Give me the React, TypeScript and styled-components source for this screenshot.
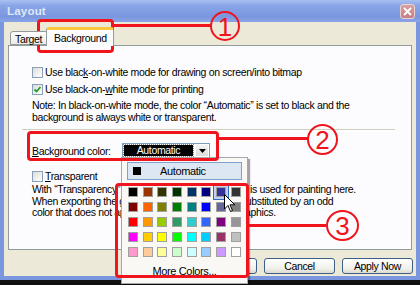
import styled, { createGlobalStyle } from "styled-components";

const GlobalStyle = createGlobalStyle`
  html, body {
    margin: 0;
    padding: 0;
    background: #101010;
  }
  body {
    font-family: "Liberation Sans", Arial, sans-serif;
    font-size: 10.5px;
    letter-spacing: -0.35px;
    color: #000000;
  }
`;

const Screen = styled.div`
  position: relative;
  width: 420px;
  height: 285px;
  overflow: hidden;
`;

const Window = styled.div`
  width: 420px;
  height: 280px;
  box-sizing: border-box;
  background: #ece9d8;
  border: 4px solid #7a96df;
  border-top: 0;
  display: flex;
  flex-direction: column;
`;

const TitleBar = styled.div`
  margin: 0 -4px;
  height: 22px;
  flex: none;
  display: flex;
  align-items: center;
  justify-content: space-between;
  padding: 0 5px 0 7px;
  background: linear-gradient(#a9c0f0 0%, #8aa6e8 25%, #7a96df 75%, #8aa4e6 100%);
`;

const Title = styled.div`
  font-weight: 700;
  font-size: 11.5px;
  letter-spacing: 0.2px;
  color: #dfe7f8;
`;

const CloseButton = styled.div`
  width: 15px;
  height: 15px;
  box-sizing: border-box;
  border: 1px solid #eed2d2;
  border-radius: 3px;
  background: linear-gradient(#d9a0a0, #c57f84);
  display: flex;
  align-items: center;
  justify-content: center;
  margin-top: 1px;
`;

const Body = styled.div`
  flex: 1;
  display: flex;
  flex-direction: column;
  padding: 5px 4px 0 4px;
`;

const TabStrip = styled.div`
  height: 18px;
  display: flex;
  align-items: flex-end;
  padding-left: 2px;
  position: relative;
  z-index: 1;
`;

const Tab = styled.div<{ $active?: boolean }>`
  box-sizing: border-box;
  height: ${(p) => (p.$active ? "19px" : "14px")};
  margin-bottom: ${(p) => (p.$active ? "-1px" : "0")};
  margin-left: ${(p) => (p.$active ? "-2px" : "0")};
  padding: ${(p) => (p.$active ? "2px 6px 0 7px" : "1px 5px 0 4px")};
  border: 1px solid #919b9c;
  border-bottom: ${(p) => (p.$active ? "0" : "1px solid #919b9c")};
  border-top: ${(p) => (p.$active ? "3px solid #ffc83c" : "1px solid #919b9c")};
  border-radius: 3px 3px 0 0;
  background: ${(p) => (p.$active ? "#fcfcfe" : "linear-gradient(#ffffff, #ecebe6)")};
  line-height: 12px;
  white-space: nowrap;
`;

const Panel = styled.div`
  height: 205px;
  box-sizing: border-box;
  border: 1px solid #919b9c;
  background: #fcfcfe;
  padding: 18px 16px 0 23px;
  display: flex;
  flex-direction: column;
`;

const CheckRow = styled.div<{ $gap?: number }>`
  height: 16px;
  display: flex;
  align-items: center;
  gap: 2px;
  margin-top: ${(p) => p.$gap ?? 0}px;
  white-space: nowrap;
`;

const CheckBox = styled.div`
  width: 11px;
  height: 11px;
  box-sizing: border-box;
  border: 1px solid #8aa0b8;
  background: linear-gradient(135deg, #dcdcd6, #ffffff);
  display: flex;
  align-items: center;
  justify-content: center;
  flex: none;
`;

const Key = styled.span`
  text-decoration: underline;
`;

const Paragraph = styled.div<{ $gap: number; $line: number }>`
  margin-top: ${(p) => p.$gap}px;
  line-height: ${(p) => p.$line}px;
  white-space: nowrap;
`;

const Separator = styled.div`
  margin: 6px 0 0 -10px;
  height: 1px;
  border-top: 1px solid #d0d0bf;
  border-bottom: 1px solid #ffffff;
`;

const ColorRow = styled.div`
  margin-top: 10px;
  height: 17px;
  display: flex;
  align-items: center;
`;

const Label = styled.div`
  width: 90px;
  white-space: nowrap;
`;

const Combo = styled.div`
  width: 88px;
  height: 15px;
  box-sizing: border-box;
  border: 1px solid #7f9db9;
  background: #ffffff;
  display: flex;
  align-items: center;
  padding: 1px;
  gap: 3px;
`;

const ComboValue = styled.div`
  flex: 1;
  height: 11px;
  background: #000000;
  color: #ffffff;
  outline: 1px dotted #888888;
  display: flex;
  align-items: center;
  justify-content: center;
  font-size: 10.5px;
  line-height: 11px;
`;

const ComboArrow = styled.div`
  width: 12px;
  height: 11px;
  background: linear-gradient(#f4f4f4, #dcdcdc);
  display: flex;
  align-items: center;
  justify-content: center;
`;

const Buttons = styled.div`
  margin-top: 8px;
  display: flex;
  justify-content: flex-end;
  gap: 7px;
  margin-right: -1px;
`;

const Button = styled.div`
  width: 71px;
  height: 16px;
  box-sizing: border-box;
  border: 1px solid #3c5f87;
  border-radius: 3px;
  background: linear-gradient(#ffffff, #f0efe9 70%, #dcdad0);
  display: flex;
  align-items: center;
  justify-content: center;
`;

/* overlays: the open colour menu, the cursor and the red annotations */

const Popup = styled.div`
  position: absolute;
  left: 121px;
  top: 157px;
  width: 127px;
  height: 127px;
  box-sizing: border-box;
  border: 1px solid #a7a6aa;
  background: #f9f8f4;
  box-shadow: 2px 2px 1px rgba(0, 0, 0, 0.35);
  padding: 4px 5px 0 5px;
  display: flex;
  flex-direction: column;
`;

const AutoButton = styled.div`
  height: 18px;
  box-sizing: border-box;
  border: 1px solid #7da2ce;
  background: #dde6f3;
  display: flex;
  align-items: center;
  padding-left: 5px;
  font-size: 11px;
`;

const AutoSquare = styled.div`
  width: 8px;
  height: 8px;
  background: #000000;
  margin-right: 19px;
`;

const Palette = styled.div`
  margin: 7px 0 0 1px;
  display: grid;
  grid-template-columns: repeat(8, 10px);
  column-gap: 4.7px;
  row-gap: 5px;
`;

const Swatch = styled.div<{ $color: string; $selected?: boolean }>`
  width: 10px;
  height: 10px;
  box-sizing: border-box;
  border: 1px solid #a0a0a0;
  background: ${(p) => p.$color};
  box-shadow: ${(p) => (p.$selected ? "0 0 0 2px #c1d2ee, 0 0 0 3px #316ac5" : "none")};
`;

const MoreColors = styled.div`
  margin-top: 8px;
  text-align: center;
  font-size: 11px;
`;

const RedBox = styled.div<{ $x: number; $y: number; $w: number; $h: number }>`
  position: absolute;
  left: ${(p) => p.$x}px;
  top: ${(p) => p.$y}px;
  width: ${(p) => p.$w}px;
  height: ${(p) => p.$h}px;
  box-sizing: border-box;
  border: 3px solid #f0141c;
  border-radius: 4px;
`;

const RedLine = styled.div<{ $x: number; $y: number; $w: number }>`
  position: absolute;
  left: ${(p) => p.$x}px;
  top: ${(p) => p.$y}px;
  width: ${(p) => p.$w}px;
  height: 3px;
  background: #f0141c;
`;

const Marker = styled.div<{ $x: number; $y: number; $w: number; $h: number }>`
  position: absolute;
  left: ${(p) => p.$x}px;
  top: ${(p) => p.$y}px;
  width: ${(p) => p.$w}px;
  height: ${(p) => p.$h}px;
  box-sizing: border-box;
  border: 2.5px solid #f0141c;
  border-radius: 50%;
  color: #f0141c;
  font-family: "Liberation Sans", Arial, sans-serif;
  font-size: 26px;
  letter-spacing: 0;
  line-height: 1;
  padding-top: 1px;
  display: flex;
  align-items: center;
  justify-content: center;
`;

const Cursor = styled.svg`
  position: absolute;
  left: 224px;
  top: 194px;
`;

const palette = [
  ["#000000", "#993300", "#333300", "#003300", "#003366", "#000080", "#333399", "#333333"],
  ["#800000", "#ff6600", "#808000", "#008000", "#008080", "#0000ff", "#666699", "#808080"],
  ["#ff0000", "#ff9900", "#99cc00", "#339966", "#33cccc", "#3366ff", "#800080", "#969696"],
  ["#ff00ff", "#ffcc00", "#ffff00", "#00ff00", "#00ffff", "#00ccff", "#993366", "#c0c0c0"],
  ["#ff99cc", "#ffcc99", "#ffff99", "#ccffcc", "#ccffff", "#99ccff", "#cc99ff", "#ffffff"],
];

const Check = () => (
  <svg width="9" height="9" viewBox="0 0 9 9">
    <path d="M1.5 4.5 L3.5 6.5 L7.5 2" stroke="#21a121" strokeWidth="1.8" fill="none" />
  </svg>
);

export default function App() {
  return (
    <Screen>
      <GlobalStyle />
      <Window>
        <TitleBar>
          <Title>Layout</Title>
          <CloseButton>
            <svg width="9" height="9" viewBox="0 0 9 9">
              <path d="M1 1 L8 8 M8 1 L1 8" stroke="#ffffff" strokeWidth="1.8" />
            </svg>
          </CloseButton>
        </TitleBar>
        <Body>
          <TabStrip>
            <Tab>Target</Tab>
            <Tab $active>Background</Tab>
          </TabStrip>
          <Panel>
            <CheckRow>
              <CheckBox />
              <span>
                Use blac<Key>k</Key>-on-white mode for drawing on screen/into bitmap
              </span>
            </CheckRow>
            <CheckRow $gap={1}>
              <CheckBox>
                <Check />
              </CheckBox>
              <span>
                Use black-on-<Key>w</Key>hite mode for printing
              </span>
            </CheckRow>
            <Paragraph $gap={2} $line={12}>
              Note: In black-on-white mode, the color “Automatic” is set to black and the
              <br />
              background is always white or transparent.
            </Paragraph>
            <Separator />
            <ColorRow>
              <Label>
                <Key>B</Key>ackground color:
              </Label>
              <Combo>
                <ComboValue>Automatic</ComboValue>
                <ComboArrow>
                  <svg width="7" height="4" viewBox="0 0 7 4">
                    <path d="M0 0 H7 L3.5 4 Z" fill="#000000" />
                  </svg>
                </ComboArrow>
              </Combo>
            </ColorRow>
            <CheckRow $gap={9}>
              <CheckBox />
              <span>
                <Key>T</Key>ransparent
              </span>
            </CheckRow>
            <Paragraph $gap={0} $line={11.5}>
              With “Transparency” checked, a background color is used for painting here.
              <br />
              When exporting the graphics, the background is substituted by an odd
              <br />
              color that does not appear at any in the original graphics.
            </Paragraph>
          </Panel>
          <Buttons>
            <Button>OK</Button>
            <Button>Cancel</Button>
            <Button>Apply Now</Button>
          </Buttons>
        </Body>
      </Window>

      <Popup>
        <AutoButton>
          <AutoSquare />
          Automatic
        </AutoButton>
        <Palette>
          {palette.flatMap((row, r) =>
            row.map((c, i) => <Swatch key={`${r}-${i}`} $color={c} $selected={r === 0 && i === 6} />)
          )}
        </Palette>
        <MoreColors>More Colors...</MoreColors>
      </Popup>

      <Cursor width="12" height="19" viewBox="0 0 12 19">
        <path d="M0.5 0.5 V15 L4 11.5 L6.5 17.5 L8.5 16.5 L6 10.8 H10.8 Z" fill="#ffffff" stroke="#000000" strokeWidth="1" />
      </Cursor>

      <RedBox $x={37} $y={19} $w={77} $h={34} />
      <RedLine $x={113} $y={24} $w={98} />
      <Marker $x={210} $y={11} $w={30} $h={30}>1</Marker>

      <RedBox $x={27} $y={131} $w={192} $h={30} />
      <RedLine $x={218} $y={137} $w={90} />
      <Marker $x={307} $y={124} $w={31} $h={31}>2</Marker>

      <RedBox $x={115} $y={183} $w={134} $h={95} />
      <RedLine $x={248} $y={224} $w={78} />
      <Marker $x={326} $y={210} $w={33} $h={31}>3</Marker>
    </Screen>
  );
}
